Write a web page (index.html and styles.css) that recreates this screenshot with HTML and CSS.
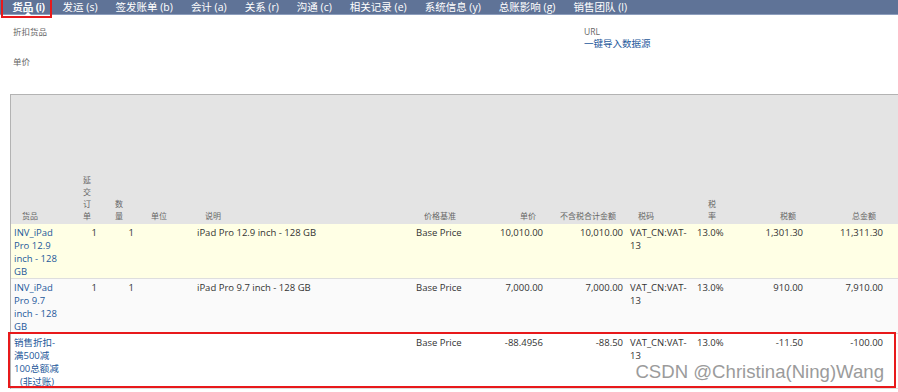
FILE: index.html
```html
<!DOCTYPE html>
<html lang="zh-CN">
<head>
    <meta charset="UTF-8">
    <meta name="viewport" content="width=device-width, initial-scale=1.0">
    <title>货品</title>
    <link rel="stylesheet" href="styles.css">
</head>
<body>
    <div class="tabs">
        <span class="tab active">货品 (i)</span>
        <span class="tab">发运 (s)</span>
        <span class="tab">签发账单 (b)</span>
        <span class="tab">会计 (a)</span>
        <span class="tab">关系 (r)</span>
        <span class="tab">沟通 (c)</span>
        <span class="tab">相关记录 (e)</span>
        <span class="tab">系统信息 (y)</span>
        <span class="tab">总账影响 (g)</span>
        <span class="tab">销售团队 (l)</span>
    </div>

    <div class="fields">
        <div class="field-col">
            <div class="field">
                <div class="label">折扣货品</div>
                <div class="value"></div>
            </div>
            <div class="field">
                <div class="label">单价</div>
                <div class="value"></div>
            </div>
        </div>
        <div class="field-col">
            <div class="field">
                <div class="label">URL</div>
                <div class="value"><a class="link-import">一键导入数据源</a></div>
            </div>
        </div>
    </div>

    <div class="items">
        <div class="row head">
            <div class="c c-item">货品</div>
            <div class="c c-back">延交订单</div>
            <div class="c c-qty">数量</div>
            <div class="c">单位</div>
            <div class="c">说明</div>
            <div class="c">价格基准</div>
            <div class="c r">单价</div>
            <div class="c r">不含税合计金额</div>
            <div class="c">税码</div>
            <div class="c c-rate">税率</div>
            <div class="c r">税额</div>
            <div class="c r">总金额</div>
            <div class="c"></div>
        </div>

        <div class="row line odd">
            <div class="c c-item"><a>INV_iPad Pro 12.9 inch - 128 GB</a></div>
            <div class="c c-back r">1</div>
            <div class="c c-qty r">1</div>
            <div class="c"></div>
            <div class="c">iPad Pro 12.9 inch - 128 GB</div>
            <div class="c">Base Price</div>
            <div class="c r">10,010.00</div>
            <div class="c r">10,010.00</div>
            <div class="c c-code">VAT_CN:VAT-13</div>
            <div class="c">13.0%</div>
            <div class="c r">1,301.30</div>
            <div class="c r">11,311.30</div>
            <div class="c"></div>
        </div>

        <div class="row line even">
            <div class="c c-item"><a>INV_iPad Pro 9.7 inch - 128 GB</a></div>
            <div class="c c-back r">1</div>
            <div class="c c-qty r">1</div>
            <div class="c"></div>
            <div class="c">iPad Pro 9.7 inch - 128 GB</div>
            <div class="c">Base Price</div>
            <div class="c r">7,000.00</div>
            <div class="c r">7,000.00</div>
            <div class="c c-code">VAT_CN:VAT-13</div>
            <div class="c">13.0%</div>
            <div class="c r">910.00</div>
            <div class="c r">7,910.00</div>
            <div class="c"></div>
        </div>

        <div class="row line marked">
            <div class="c c-item"><a>销售折扣-满500减100总额减 <span class="nonpost">(非过账)</span></a></div>
            <div class="c c-back r"></div>
            <div class="c c-qty r"></div>
            <div class="c"></div>
            <div class="c"></div>
            <div class="c">Base Price</div>
            <div class="c r">-88.4956</div>
            <div class="c r">-88.50</div>
            <div class="c c-code">VAT_CN:VAT-13</div>
            <div class="c">13.0%</div>
            <div class="c r">-11.50</div>
            <div class="c r">-100.00</div>
            <div class="c"></div>
        </div>
    </div>

    <div class="watermark">CSDN @Christina(Ning)Wang</div>
</body>
</html>
```

FILE: styles.css
```css
body {
    margin: 0;
    width: 898px;
    height: 392px;
    overflow: hidden;
    position: relative;
    font-family: "Open Sans", "Noto Sans CJK SC", sans-serif;
    font-size: 9.5px;
    color: #333;
    background: #fff;
}
a {
    color: #24589a;
    text-decoration: none;
}

/* tab bar */
.tabs {
    display: flex;
    height: 14px;
    padding-left: 3px;
    background: #5f7397;
    border-bottom: 1px solid #8d9ebd;
}
.tab {
    position: relative;
    padding: 0 9px;
    color: #fff;
    font-size: 10.5px;
    line-height: 14px;
    white-space: nowrap;
}
.tab.active {
    text-shadow: 0.4px 0 0 #fff;
}
.tab.active::before {
    content: "";
    position: absolute;
    left: 50%;
    bottom: -1px;
    margin-left: -3px;
    border: 3px solid transparent;
    border-bottom-color: #fff;
    border-top: 0;
}
.tab.active::after {
    content: "";
    position: absolute;
    left: -2px;
    right: 2px;
    top: -2px;
    bottom: -4px;
    border: 2px solid #e8191b;
}

/* header fields */
.fields {
    display: flex;
    padding: 11px 0 0 13px;
}
.field-col {
    flex: 0 0 571px;
}
.field-col + .field-col {
    flex: 1 1 auto;
}
.field {
    margin-bottom: 6px;
}
.label {
    font-size: 8.5px;
    line-height: 12px;
    color: #666;
}
.value {
    min-height: 12px;
    line-height: 12px;
}
.link-import {
    font-size: 9.5px;
}

/* item sublist */
.items {
    margin: 8px 0 0 10px;
    border-top: 1px solid #b3b3b3;
    border-left: 1px solid #b3b3b3;
}
.row {
    display: grid;
    grid-template-columns: 64px 32px 33px 54px 219px 57px 77px 80px 67px 41px 72px 80px 1fr;
}
.c {
    padding: 0 4px 0 3px;
    min-width: 0;
}
.r {
    text-align: right;
}
.head {
    height: 129px;
    align-items: end;
    background: #e4e4e4;
}
.head .c {
    padding: 0 4px 2px 11px;
    font-size: 8px;
    line-height: 12px;
    color: #666;
}
.head .r {
    padding-right: 11px;
}
.head .c-back,
.head .c-qty {
    padding-left: 8px;
    padding-right: 10px;
}
.head .c-rate {
    padding-left: 14px;
    padding-right: 12px;
}
.line {
    position: relative;
    padding-top: 2px;
    line-height: 13px;
    border-bottom: 1px solid #dedede;
}
.line .c-item {
    padding-right: 13px;
}
.line .c-back {
    padding-right: 10px;
}
.line .c-qty {
    padding-right: 6px;
}
.odd {
    background: #ffffe5;
}
.even {
    background: #fafafa;
}
.marked {
    background: #fff;
}
.marked::after {
    content: "";
    position: absolute;
    left: -3px;
    right: 2px;
    top: -2px;
    bottom: 0;
    border: 2px solid #e8191b;
}
.nonpost {
    margin-left: 6px;
}

.watermark {
    position: absolute;
    right: 14px;
    bottom: 9px;
    font-family: "Liberation Sans", Arial, sans-serif;
    font-size: 18.6px;
    color: #9b9b9b;
    text-shadow: 0 0 2px #fff;
    white-space: nowrap;
}
```
